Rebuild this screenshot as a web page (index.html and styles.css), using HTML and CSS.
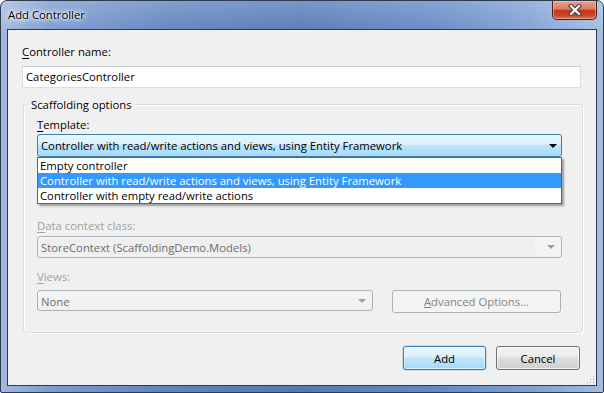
FILE: index.html
```html
<!DOCTYPE html>
<html lang="en">
<head>
    <meta charset="UTF-8">
    <meta name="viewport" content="width=device-width, initial-scale=1.0">
    <title>Add Controller</title>
    <link rel="stylesheet" href="styles.css">
</head>
<body>

<div class="window">
    <div class="titlebar">
        <span class="title">Add Controller</span>
        <div class="close-btn">
            <svg width="14" height="12" viewBox="0 0 14 12">
                <path d="M3 2 L11 10 M11 2 L3 10" stroke="#3b3b3b" stroke-width="4.2" stroke-linecap="square"/>
                <path d="M3 2 L11 10 M11 2 L3 10" stroke="#ffffff" stroke-width="2.2" stroke-linecap="square"/>
            </svg>
        </div>
    </div>

    <div class="client">
        <div class="label name-label"><u>C</u>ontroller name:</div>
        <div class="textbox">CategoriesController</div>

        <fieldset class="group">
            <legend>Scaffolding options</legend>

            <div class="label"><u>T</u>emplate:</div>
            <div class="combo-holder">
                <div class="combo active">
                    <span>Controller with read/write actions and views, using Entity Framework</span>
                    <span class="arrow"></span>
                </div>
                <ul class="dropdown">
                    <li>Empty controller</li>
                    <li class="selected">Controller with read/write actions and views, using Entity Framework</li>
                    <li>Controller with empty read/write actions</li>
                </ul>
            </div>

            <div class="label disabled context-label"><u>D</u>ata context class:</div>
            <div class="combo disabled-combo">
                <span class="combo-text">StoreContext (ScaffoldingDemo.Models)</span>
                <span class="arrow gray"></span>
            </div>

            <div class="label disabled views-label"><u>V</u>iews:</div>
            <div class="views-row">
                <div class="combo disabled-combo views-combo">
                    <span class="combo-text">None</span>
                    <span class="arrow gray"></span>
                </div>
                <button class="btn disabled-btn"><u>A</u>dvanced Options...</button>
            </div>
        </fieldset>

        <div class="footer">
            <button class="btn default-btn">Add</button>
            <button class="btn">Cancel</button>
        </div>

        <svg class="grip" width="10" height="10" viewBox="0 0 10 10">
            <rect x="8" y="2" width="1" height="1" fill="#a8a8a8"/>
            <rect x="5" y="5" width="1" height="1" fill="#a8a8a8"/>
            <rect x="8" y="5" width="1" height="1" fill="#a8a8a8"/>
            <rect x="2" y="8" width="1" height="1" fill="#a8a8a8"/>
            <rect x="5" y="8" width="1" height="1" fill="#a8a8a8"/>
            <rect x="8" y="8" width="1" height="1" fill="#a8a8a8"/>
        </svg>
    </div>
</div>

</body>
</html>
```

FILE: styles.css
```css
body {
    margin: 0;
    background: #ffffff;
    font-family: "Open Sans", "Noto Sans", sans-serif;
    font-size: 11.3px;
    color: #000;
}
.window {
    width: 604px;
    height: 393px;
    box-sizing: border-box;
    border: 1px solid #2f3a4c;
    border-radius: 7px 7px 2px 2px;
    background: linear-gradient(90deg, #a3b9de 0%, #7c9bd0 8%, #5f83bf 28%, #5479b7 50%, #628ac6 72%, #7fa0d3 88%, #a4bce0 100%);
    display: flex;
    flex-direction: column;
    overflow: hidden;
}
.titlebar {
    height: 28px;
    display: flex;
    justify-content: space-between;
    align-items: flex-start;
    background: linear-gradient(180deg, rgba(255,255,255,0.22) 0%, rgba(255,255,255,0.05) 100%);
}
.title {
    margin: 6px 0 0 7px;
    line-height: 15px;
    font-size: 11.3px;
    color: #000;
    text-shadow: 0 0 7px #fff, 0 0 5px #fff, 0 0 3px #fff;
}
.close-btn {
    width: 45px;
    height: 19px;
    margin-right: 6px;
    box-sizing: border-box;
    border: 1px solid #4e2118;
    border-top: none;
    border-radius: 0 0 5px 5px;
    background: linear-gradient(180deg, #e9a28f 0%, #da7c64 45%, #c3371f 52%, #c9452a 80%, #e0764f 100%);
    box-shadow: inset 0 0 0 1px rgba(255,210,195,0.45);
    display: flex;
    justify-content: center;
    align-items: center;
}
.client {
    position: relative;
    flex: 1;
    margin: 0 6px 6px 6px;
    border: 1px solid #2c3b55;
    background: #f0f0f0;
    padding: 14px 15px 0 14px;
}
.label {
    line-height: 15px;
    height: 15px;
}
.label u {
    text-decoration-thickness: 1px;
    text-underline-offset: 2px;
}
.disabled {
    color: #a0a0a0;
}
.textbox {
    margin-top: 7px;
    height: 22px;
    box-sizing: border-box;
    border: 1px solid #dadde3;
    border-top-color: #c5c9d0;
    background: #fff;
    line-height: 20px;
    padding-left: 3px;
}
.group {
    margin: 9px -2px 0 1px;
    padding: 5px 20px 19px 13px;
    border: 1px solid #d5dfe5;
    border-radius: 3px;
    box-shadow: inset 1px 1px 0 #fff, 1px 1px 0 #fff;
    min-inline-size: 0;
}
.group legend {
    margin-left: -8px;
    padding: 0 2px;
    line-height: 15px;
}
.combo-holder {
    position: relative;
    margin-top: 2px;
}
.combo {
    height: 23px;
    box-sizing: border-box;
    border: 1px solid #acb2b7;
    border-radius: 3px;
    display: flex;
    align-items: center;
    justify-content: space-between;
    padding: 0 4px 0 3px;
}
.combo.active {
    border-color: #3c7fb1;
    background: linear-gradient(180deg, #eaf6fd 0%, #d9f0fc 45%, #bee6fd 50%, #a7d9f5 100%);
}
.arrow {
    width: 0;
    height: 0;
    border-left: 4px solid transparent;
    border-right: 4px solid transparent;
    border-top: 4px solid #000;
}
.arrow.gray {
    border-top-color: #a0a0a0;
}
.dropdown {
    position: absolute;
    top: 100%;
    left: 0;
    right: 0;
    margin: 0;
    padding: 0;
    list-style: none;
    background: #fff;
    border: 1px solid #646464;
    box-shadow: 2px 2px 2px rgba(0,0,0,0.35);
    z-index: 5;
}
.dropdown li {
    line-height: 15px;
    height: 15px;
    padding-left: 2px;
}
.dropdown li.selected {
    background: #3399ff;
    color: #fff;
}
.context-label {
    margin-top: 61px;
}
.disabled-combo {
    margin-top: 3px;
    height: 22px;
    background: #f4f4f4;
    color: #6d6d6d;
    padding: 2px 6px 2px 2px;
}
.disabled-combo .combo-text {
    flex: 1;
    align-self: stretch;
    background: #efefef;
    line-height: 18px;
    padding-left: 1px;
    margin-right: 12px;
}
.views-label {
    margin-top: 11px;
}
.views-row {
    display: flex;
    align-items: flex-start;
    gap: 19px;
    margin-top: 6px;
}
.views-combo {
    margin-top: 0;
    width: 336px;
    height: 21px;
    background: linear-gradient(180deg, #f4f4f4 0%, #f0f0f0 100%);
}
.views-combo .combo-text {
    background: none;
    line-height: 17px;
}
.btn {
    font-family: inherit;
    font-size: inherit;
    height: 23px;
    box-sizing: border-box;
    border: 1px solid #707070;
    border-radius: 3px;
    background: linear-gradient(180deg, #f2f2f2 0%, #ebebeb 45%, #dddddd 50%, #cfcfcf 100%);
    box-shadow: inset 0 0 0 1px rgba(255,255,255,0.7);
    padding: 0;
    color: #000;
}
.disabled-btn {
    width: 169px;
    border-color: #adb2b5;
    background: #f4f4f4;
    color: #838383;
    box-shadow: none;
}
.footer {
    display: flex;
    justify-content: flex-end;
    gap: 10px;
    margin: 13px 1px 0 0;
}
.footer .btn {
    width: 84px;
    height: 24px;
}
.default-btn {
    width: 83px !important;
    border-color: #3c7fb1;
    background: linear-gradient(180deg, #eaf6fd 0%, #d9f0fc 45%, #bee6fd 50%, #a7d9f5 100%);
    box-shadow: inset 0 0 0 1px rgba(255,255,255,0.5), 0 0 0 1px rgba(60,127,177,0.2);
}
.grip {
    position: absolute;
    right: 1px;
    bottom: 1px;
}
```
